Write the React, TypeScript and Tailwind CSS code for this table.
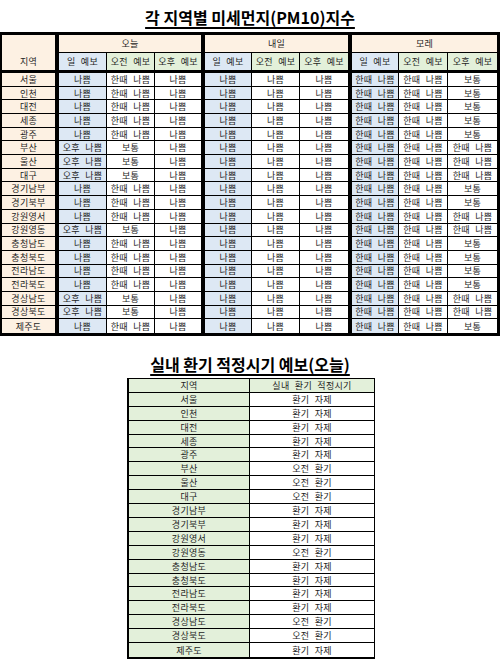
import React from 'react';

const font = "font-['Noto_Sans_CJK_KR','Noto_Sans',sans-serif]";

type Row = {
  region: string;
  bad: boolean; // 오후 나쁨 / 보통 pattern for today
  dayAfterPm: string;
  vent: string;
};

const rows: Row[] = [
  { region: '서울', bad: false, dayAfterPm: '보통', vent: '환기 자제' },
  { region: '인천', bad: false, dayAfterPm: '보통', vent: '환기 자제' },
  { region: '대전', bad: false, dayAfterPm: '보통', vent: '환기 자제' },
  { region: '세종', bad: false, dayAfterPm: '보통', vent: '환기 자제' },
  { region: '광주', bad: false, dayAfterPm: '보통', vent: '환기 자제' },
  { region: '부산', bad: true, dayAfterPm: '한때 나쁨', vent: '오전 환기' },
  { region: '울산', bad: true, dayAfterPm: '한때 나쁨', vent: '오전 환기' },
  { region: '대구', bad: true, dayAfterPm: '한때 나쁨', vent: '오전 환기' },
  { region: '경기남부', bad: false, dayAfterPm: '보통', vent: '환기 자제' },
  { region: '경기북부', bad: false, dayAfterPm: '보통', vent: '환기 자제' },
  { region: '강원영서', bad: false, dayAfterPm: '한때 나쁨', vent: '환기 자제' },
  { region: '강원영동', bad: true, dayAfterPm: '한때 나쁨', vent: '오전 환기' },
  { region: '충청남도', bad: false, dayAfterPm: '보통', vent: '환기 자제' },
  { region: '충청북도', bad: false, dayAfterPm: '보통', vent: '환기 자제' },
  { region: '전라남도', bad: false, dayAfterPm: '보통', vent: '환기 자제' },
  { region: '전라북도', bad: false, dayAfterPm: '보통', vent: '환기 자제' },
  { region: '경상남도', bad: true, dayAfterPm: '한때 나쁨', vent: '오전 환기' },
  { region: '경상북도', bad: true, dayAfterPm: '한때 나쁨', vent: '오전 환기' },
  { region: '제주도', bad: false, dayAfterPm: '보통', vent: '환기 자제' },
];

// right border per column (지역 + 9 forecast columns)
const colBorder = [
  'border-r-4',
  'border-r',
  'border-r',
  'border-r-4',
  'border-r',
  'border-r',
  'border-r-4',
  'border-r',
  'border-r',
  '',
];

// background per column for data rows
const colBg = [
  'bg-[#fdf1e3]',
  'bg-[#dde8f4]',
  'bg-white',
  'bg-white',
  'bg-[#dde8f4]',
  'bg-white',
  'bg-white',
  'bg-[#dde8f4]',
  'bg-white',
  'bg-white',
];

const subHeads = ['일 예보', '오전 예보', '오후 예보'];
const subHeadBg = ['bg-[#dde8f4]', 'bg-[#e3f0da]', 'bg-[#e3f0da]'];

const Cell = ({ className = '', children }: { className?: string; children?: React.ReactNode }) => (
  <div className={`flex items-center justify-center border-black text-[9px] leading-none tracking-[0.3px] [word-spacing:3px] text-[#1e1e1e] whitespace-nowrap ${className}`}>
    {children}
  </div>
);

const DustTable = () => (
  <div className="w-[500px] border-t-[3px] border-l-2 border-r-[3px] border-b-[3px] border-black">
    <div className="grid grid-cols-[57px_48px_48px_50px_47px_48px_52px_47px_49px_49px] grid-rows-[18px_20px_repeat(19,minmax(0,1fr))] h-[298px]">
      {/* header row 1 */}
      <Cell className="bg-[#fdf1e3] border-r-4" />
      <Cell className="col-span-3 bg-[#fdf1e3] border-r-4 border-b">오늘</Cell>
      <Cell className="col-span-3 bg-[#fdf1e3] border-r-4 border-b">내일</Cell>
      <Cell className="col-span-3 bg-[#fdf1e3] border-b">모레</Cell>

      {/* header row 2 */}
      <Cell className="bg-[#fdf1e3] border-r-4 border-b-[3px]">지역</Cell>
      {[0, 1, 2].map((g) =>
        subHeads.map((h, i) => (
          <Cell key={`${g}-${i}`} className={`${subHeadBg[i]} ${colBorder[g * 3 + i + 1]} border-b-[3px]`}>
            {h}
          </Cell>
        ))
      )}

      {/* data rows */}
      {rows.map((r, ri) => {
        const values = [
          r.region,
          r.bad ? '오후 나쁨' : '나쁨',
          r.bad ? '보통' : '한때 나쁨',
          '나쁨',
          '나쁨',
          '나쁨',
          '나쁨',
          '한때 나쁨',
          '한때 나쁨',
          r.dayAfterPm,
        ];
        const last = ri === rows.length - 1;
        return values.map((v, ci) => (
          <Cell key={`${ri}-${ci}`} className={`${colBg[ci]} ${colBorder[ci]} ${last ? '' : 'border-b'}`}>
            {v}
          </Cell>
        ));
      })}
    </div>
  </div>
);

const VentTable = () => (
  <div className="w-[248px] h-[281px] border-l-2 border-b-2 border-t border-r border-black grid grid-cols-[121px_1fr] grid-rows-[repeat(20,minmax(0,1fr))]">
    <Cell className="bg-[#e3f0da] border-r border-b">지역</Cell>
    <Cell className="bg-[#e3f0da] border-b">실내 환기 적정시기</Cell>
    {rows.map((r, ri) => {
      const last = ri === rows.length - 1;
      return (
        <React.Fragment key={r.region}>
          <Cell className={`bg-[#e3f0da] border-r ${last ? '' : 'border-b'}`}>{r.region}</Cell>
          <Cell className={`bg-white ${last ? '' : 'border-b'}`}>{r.vent}</Cell>
        </React.Fragment>
      );
    })}
  </div>
);

export default function App() {
  return (
    <div className={`w-[500px] h-[669px] bg-white ${font} flex flex-col`}>
      <div className="h-[32px] pt-[8px] text-center text-[16px] leading-[18px] font-bold text-black underline decoration-2 underline-offset-[3px]">
        각 지역별 미세먼지(PM10)지수
      </div>
      <DustTable />
      <div className="h-[42px] pt-[19px] text-center text-[16px] leading-[18px] font-bold text-black underline decoration-2 underline-offset-[3px]">
        실내 환기 적정시기 예보(오늘)
      </div>
      <div className="flex justify-center pl-[2px]">
        <VentTable />
      </div>
    </div>
  );
}
